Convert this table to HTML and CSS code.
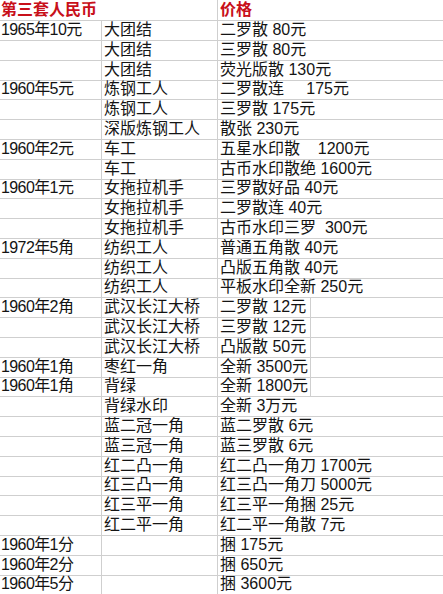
FILE: index.html
```html
<!DOCTYPE html>
<html lang="zh">
<head>
<meta charset="utf-8">
<title>第三套人民币 价格</title>
<link rel="stylesheet" href="styles.css">
</head>
<body>
<div class="sheet">
  <div class="row head"><div class="c a title">第三套人民币</div><div class="c b"></div><div class="c p title">价格</div><div class="c d"></div></div>
  <div class="row"><div class="c a">1965年10元</div><div class="c b">大团结</div><div class="c p">二罗散 80元</div><div class="c d"></div></div>
  <div class="row"><div class="c a"></div><div class="c b">大团结</div><div class="c p">三罗散 80元</div><div class="c d"></div></div>
  <div class="row"><div class="c a"></div><div class="c b">大团结</div><div class="c p">荧光版散 130元</div><div class="c d"></div></div>
  <div class="row"><div class="c a">1960年5元</div><div class="c b">炼钢工人</div><div class="c p">二罗散连     175元</div><div class="c d"></div></div>
  <div class="row"><div class="c a"></div><div class="c b">炼钢工人</div><div class="c p">三罗散 175元</div><div class="c d"></div></div>
  <div class="row"><div class="c a"></div><div class="c b">深版炼钢工人</div><div class="c p">散张 230元</div><div class="c d"></div></div>
  <div class="row"><div class="c a">1960年2元</div><div class="c b">车工</div><div class="c p">五星水印散    1200元</div><div class="c d"></div></div>
  <div class="row"><div class="c a"></div><div class="c b">车工</div><div class="c p">古币水印散绝 1600元</div><div class="c d"></div></div>
  <div class="row"><div class="c a">1960年1元</div><div class="c b">女拖拉机手</div><div class="c p">三罗散好品 40元</div><div class="c d"></div></div>
  <div class="row"><div class="c a"></div><div class="c b">女拖拉机手</div><div class="c p">二罗散连 40元</div><div class="c d"></div></div>
  <div class="row"><div class="c a"></div><div class="c b">女拖拉机手</div><div class="c p">古币水印三罗  300元</div><div class="c d"></div></div>
  <div class="row"><div class="c a">1972年5角</div><div class="c b">纺织工人</div><div class="c p">普通五角散 40元</div><div class="c d"></div></div>
  <div class="row"><div class="c a"></div><div class="c b">纺织工人</div><div class="c p">凸版五角散 40元</div><div class="c d"></div></div>
  <div class="row"><div class="c a"></div><div class="c b">纺织工人</div><div class="c p">平板水印全新 250元</div><div class="c d"></div></div>
  <div class="row"><div class="c a">1960年2角</div><div class="c b">武汉长江大桥</div><div class="c p edge">二罗散 12元</div><div class="c d"></div></div>
  <div class="row"><div class="c a"></div><div class="c b">武汉长江大桥</div><div class="c p edge">三罗散 12元</div><div class="c d"></div></div>
  <div class="row"><div class="c a"></div><div class="c b">武汉长江大桥</div><div class="c p edge">凸版散 50元</div><div class="c d"></div></div>
  <div class="row"><div class="c a">1960年1角</div><div class="c b">枣红一角</div><div class="c p edge">全新 3500元</div><div class="c d"></div></div>
  <div class="row"><div class="c a">1960年1角</div><div class="c b">背绿</div><div class="c p edge">全新 1800元</div><div class="c d"></div></div>
  <div class="row"><div class="c a"></div><div class="c b">背绿水印</div><div class="c p">全新 3万元</div><div class="c d"></div></div>
  <div class="row"><div class="c a"></div><div class="c b">蓝二冠一角</div><div class="c p">蓝二罗散 6元</div><div class="c d"></div></div>
  <div class="row"><div class="c a"></div><div class="c b">蓝三冠一角</div><div class="c p">蓝三罗散 6元</div><div class="c d"></div></div>
  <div class="row"><div class="c a"></div><div class="c b">红二凸一角</div><div class="c p">红二凸一角刀 1700元</div><div class="c d"></div></div>
  <div class="row"><div class="c a"></div><div class="c b">红三凸一角</div><div class="c p">红三凸一角刀 5000元</div><div class="c d"></div></div>
  <div class="row"><div class="c a"></div><div class="c b">红三平一角</div><div class="c p">红三平一角捆 25元</div><div class="c d"></div></div>
  <div class="row"><div class="c a"></div><div class="c b">红二平一角</div><div class="c p">红二平一角散 7元</div><div class="c d"></div></div>
  <div class="row"><div class="c a">1960年1分</div><div class="c b"></div><div class="c p">捆 175元</div><div class="c d"></div></div>
  <div class="row"><div class="c a">1960年2分</div><div class="c b"></div><div class="c p">捆 650元</div><div class="c d"></div></div>
  <div class="row"><div class="c a">1960年5分</div><div class="c b"></div><div class="c p">捆 3600元</div><div class="c d"></div></div>
</div>
</body>
</html>
```
FILE: styles.css
```css
html, body {
  margin: 0;
  padding: 0;
  background: #ffffff;
}

.sheet {
  width: 443px;
  height: 594px;
  overflow: hidden;
  font-family: "Liberation Sans", "Noto Sans CJK SC", sans-serif;
  font-size: 16px;
  color: #141414;
}

.row {
  display: grid;
  grid-template-columns: 102px 116px 93px 1fr;
  height: 19.8px;
}

.row.head {
  height: 20px;
}

.c {
  box-sizing: border-box;
  border-bottom: 1px solid #cfcfcf;
  border-right: 1px solid #cfcfcf;
  padding-left: 2px;
  white-space: pre;
  overflow: visible;
  line-height: 20px;
  min-width: 0;
}

.c.a {
  padding-left: 1px;
  letter-spacing: -0.6px;
}

.c.p {
  border-right: none;
}

.c.p.edge {
  border-right: 1px solid #cfcfcf;
}

.c.d {
  border-right: none;
}

.head .a {
  border-right: none;
  letter-spacing: 0;
}

.title {
  color: #c8101a;
  font-weight: bold;
  font-size: 16px;
}
```
